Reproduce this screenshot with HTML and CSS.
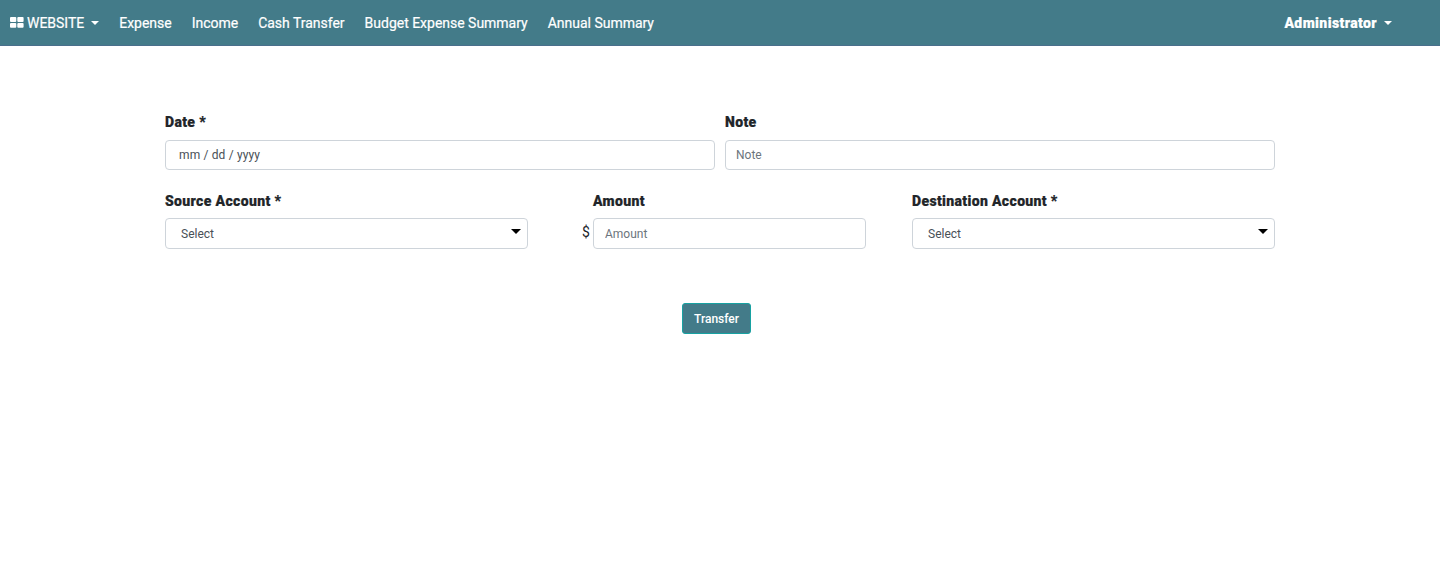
FILE: index.html

```html
<!DOCTYPE html>
<html lang="en">
<head>
  <meta charset="UTF-8">
  <title>Cash Transfer</title>
  <link rel="stylesheet" href="styles.css">
</head>
<body>
  <nav class="navbar">
    <a class="nav-link brand" href="#">
      <svg class="grid-icon" width="14" height="11" viewBox="0 0 14 11"><rect x="0" y="0" width="6.3" height="4.9" rx="1"/><rect x="7.3" y="0" width="6.3" height="4.9" rx="1"/><rect x="0" y="5.9" width="6.3" height="4.9" rx="1"/><rect x="7.3" y="5.9" width="6.3" height="4.9" rx="1"/></svg>
      WEBSITE<span class="caret"></span>
    </a>
    <a class="nav-link" href="#">Expense</a>
    <a class="nav-link" href="#">Income</a>
    <a class="nav-link" href="#">Cash Transfer</a>
    <a class="nav-link" href="#">Budget Expense Summary</a>
    <a class="nav-link" href="#">Annual Summary</a>
    <a class="nav-link user" href="#">Administrator<span class="caret"></span></a>
  </nav>

  <form class="container">
    <div class="row-two">
      <div class="field">
        <label>Date *</label>
        <input type="text" class="date-input" placeholder="mm / dd / yyyy">
      </div>
      <div class="field">
        <label>Note</label>
        <input type="text" placeholder="Note">
      </div>
    </div>

    <div class="row-three">
      <div class="field">
        <label>Source Account *</label>
        <div class="select-wrap">
          <select><option>Select</option></select>
        </div>
      </div>
      <div class="field amount-field">
        <label>Amount</label>
        <div class="amount-wrap">
          <span class="currency">$</span>
          <input type="text" class="amount-input" placeholder="Amount">
        </div>
      </div>
      <div class="field">
        <label>Destination Account *</label>
        <div class="select-wrap">
          <select><option>Select</option></select>
        </div>
      </div>
    </div>

    <div class="actions">
      <button type="button">Transfer</button>
    </div>
  </form>
</body>
</html>
```

FILE: styles.css

```css
* {
  box-sizing: border-box;
}

body {
  font-family: Roboto, sans-serif;
  font-size: 12px;
  background: #fff;
  margin: 0;
  color: #212529;
}

.navbar {
  display: flex;
  align-items: center;
  height: 46px;
  padding: 0 48px 0 10px;
  background: #437b89;
  border-bottom: 1px solid #4a6f8c;
}

.nav-link {
  color: #fff;
  font-size: 14px;
  font-weight: 400;
  letter-spacing: -0.015px;
  -webkit-text-stroke: 0.2px #fff;
  text-decoration: none;
  margin-right: 20px;
  white-space: nowrap;
}

.brand {
  display: flex;
  align-items: center;
}

.grid-icon {
  fill: #fff;
  margin-right: 3px;
}

.user {
  margin-left: auto;
  margin-right: 0;
  font-weight: 900;
  letter-spacing: 0.4px;
  -webkit-text-stroke: 0.2px #fff;
}

.caret {
  display: inline-block;
  margin-left: 7px;
  vertical-align: 3px;
  border-top: 4px solid #fff;
  border-left: 4px solid transparent;
  border-right: 4px solid transparent;
}

.container {
  width: 1110px;
  margin: 0 auto;
  padding-top: 67px;
}

.row-two {
  display: grid;
  grid-template-columns: 1fr 1fr;
  gap: 10px;
}

.row-three {
  display: grid;
  grid-template-columns: 363px 1fr 363px;
  margin-top: 22px;
}

.field label {
  display: block;
  font-size: 14px;
  font-weight: 900;
  letter-spacing: 0.35px;
  -webkit-text-stroke: 0.2px #212529;
  line-height: 18px;
  margin-bottom: 9px;
  color: #212529;
}

.row-three .field label {
  margin-bottom: 8px;
}

input,
select {
  display: block;
  width: 100%;
  height: 30px;
  font-family: Roboto, sans-serif;
  font-size: 12px;
  color: #495057;
  background: #fff;
  border: 1px solid #ced4da;
  border-radius: 4px;
  padding: 0 10px;
  outline: none;
}

input::placeholder {
  color: #6c757d;
  opacity: 1;
}

.date-input {
  padding-left: 13px;
}

.date-input::placeholder {
  color: #495057;
  letter-spacing: 0.15px;
}

select {
  height: 31px;
  padding-left: 15px;
  appearance: none;
}

.select-wrap {
  position: relative;
}

.select-wrap::after {
  content: "";
  position: absolute;
  top: 11px;
  right: 7px;
  border-top: 5px solid #000;
  border-left: 5px solid transparent;
  border-right: 5px solid transparent;
}

.amount-field {
  padding: 0 46px 0 65px;
}

.amount-wrap {
  position: relative;
}

.amount-wrap input {
  height: 31px;
  padding-left: 11px;
}

.currency {
  position: absolute;
  left: -11px;
  top: 6px;
  font-size: 14px;
  color: #212529;
}

.actions {
  display: flex;
  justify-content: center;
  margin-top: 54px;
  padding-right: 7px;
}

button {
  width: 69px;
  height: 31px;
  padding: 0;
  font-family: Roboto, sans-serif;
  font-size: 12px;
  font-weight: 500;
  color: #fff;
  background: #437b89;
  border: 1px solid #17a2a2;
  border-radius: 3px;
  cursor: pointer;
}
```
